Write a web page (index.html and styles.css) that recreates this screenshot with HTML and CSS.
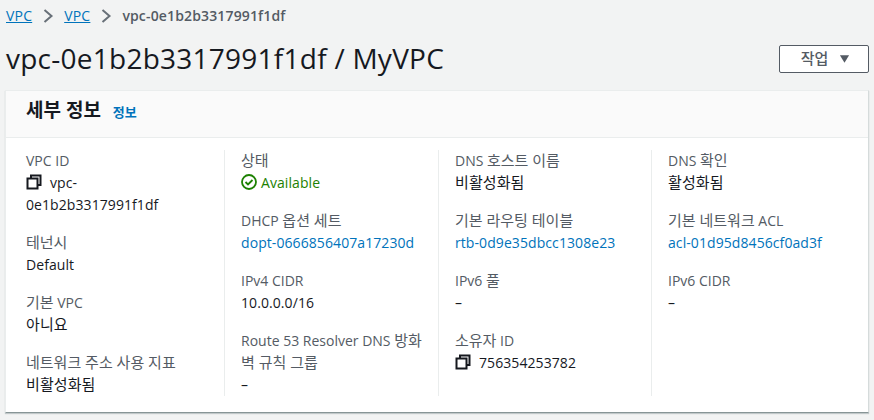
FILE: index.html
```
<!DOCTYPE html>
<html lang="ko">
<head>
<meta charset="utf-8">
<title>vpc-0e1b2b3317991f1df</title>
<link rel="stylesheet" href="styles.css">
</head>
<body>
<nav class="crumbs">
  <a href="#">VPC</a>
  <svg class="sep" viewBox="0 0 12 16"><path d="M2.5 2l7 6-7 6"/></svg>
  <a href="#">VPC</a>
  <svg class="sep" viewBox="0 0 12 16"><path d="M2.5 2l7 6-7 6"/></svg>
  <span class="current">vpc-0e1b2b3317991f1df</span>
</nav>
<header class="head">
  <h1>vpc-0e1b2b3317991f1df / MyVPC</h1>
  <button class="action"><span class="ko">작업</span><svg class="caret" viewBox="0 0 12 8"><path d="M1 0h10L6 8z"/></svg></button>
</header>
<section class="card">
  <div class="card-head"><h2>세부 정보</h2><a class="info" href="#">정보</a></div>
  <div class="grid">
    <div class="col first">
      <div class="item"><div class="k">VPC ID</div><div class="v"><svg class="copy" viewBox="0 0 16 16"><path d="M5 4V1.500h9.500V11H12"/><rect x="1.500" y="4.500" width="10" height="10"/></svg>vpc-<br>0e1b2b3317991f1df</div></div>
      <div class="item"><div class="k"><span class="ko">테넌시</span></div><div class="v">Default</div></div>
      <div class="item"><div class="k"><span class="ko">기본</span> VPC</div><div class="v"><span class="ko">아니요</span></div></div>
      <div class="item"><div class="k"><span class="ko">네트워크 주소 사용 지표</span></div><div class="v"><span class="ko">비활성화됨</span></div></div>
    </div>
    <div class="col">
      <div class="item"><div class="k"><span class="ko">상태</span></div><div class="v ok"><svg class="check" viewBox="0 0 16 16"><circle cx="8" cy="8" r="7"/><path d="M4.500 8l2.500 2.500 4.500-4.500"/></svg>Available</div></div>
      <div class="item"><div class="k">DHCP <span class="ko">옵션 세트</span></div><div class="v"><a href="#">dopt-0666856407a17230d</a></div></div>
      <div class="item"><div class="k">IPv4 CIDR</div><div class="v">10.0.0.0/16</div></div>
      <div class="item"><div class="k">Route 53 Resolver DNS <span class="ko">방화</span><br><span class="ko">벽 규칙 그룹</span></div><div class="v">–</div></div>
    </div>
    <div class="col">
      <div class="item"><div class="k">DNS <span class="ko">호스트 이름</span></div><div class="v"><span class="ko">비활성화됨</span></div></div>
      <div class="item"><div class="k"><span class="ko">기본 라우팅 테이블</span></div><div class="v"><a href="#">rtb-0d9e35dbcc1308e23</a></div></div>
      <div class="item"><div class="k">IPv6 <span class="ko">풀</span></div><div class="v">–</div></div>
      <div class="item"><div class="k"><span class="ko">소유자</span> ID</div><div class="v"><svg class="copy" viewBox="0 0 16 16"><path d="M5 4V1.500h9.500V11H12"/><rect x="1.500" y="4.500" width="10" height="10"/></svg>756354253782</div></div>
    </div>
    <div class="col">
      <div class="item"><div class="k">DNS <span class="ko">확인</span></div><div class="v"><span class="ko">활성화됨</span></div></div>
      <div class="item"><div class="k"><span class="ko">기본 네트워크</span> ACL</div><div class="v"><a href="#">acl-01d95d8456cf0ad3f</a></div></div>
      <div class="item"><div class="k">IPv6 CIDR</div><div class="v">–</div></div>
    </div>
  </div>
</section>
</body>
</html>
```
FILE: styles.css
```
* { box-sizing: border-box; }
html, body { margin: 0; height: 100%; overflow: hidden; }
body {
  background: #f2f3f3;
  color: #16191f;
  font: 14px/22px "Open Sans", "Noto Sans CJK KR", sans-serif;
  padding: 5px 5px 0 6px;
}
a { color: #0073bb; text-decoration: none; }
.ko { font-size: 15px; line-height: 1; }
.crumbs { display: flex; align-items: center; height: 22px; font-size: 14px; }
.crumbs a { color: #0073bb; text-decoration: underline; letter-spacing: .2px; }
.sep { width: 12px; height: 16px; margin: 0 10px; fill: none; stroke: #687078; stroke-width: 2; }
.current { color: #545b64; font-weight: 600; letter-spacing: .15px; }
.head { display: flex; justify-content: space-between; align-items: center; height: 63px; }
h1 { margin: -2px 0 0; font-size: 28px; line-height: 36px; font-weight: 400; letter-spacing: .25px; }
.action {
  display: flex; align-items: center; justify-content: center;
  width: 90px; height: 28px; padding: 0 0 0 3px;
  background: #fff; border: 1px solid #545b64; border-radius: 2px;
  color: #545b64; font: 500 14px/20px "Open Sans", "Noto Sans CJK KR", sans-serif;
}
.caret { width: 11px; height: 8px; margin-left: 11px; fill: #545b64; }
.card {
  height: 323px; margin-left: -1px; background: #fff;
  border: 1px solid #eaeded; border-bottom: 1px solid #879596; border-right: 1px solid #d5dbdb;
  box-shadow: 0 1px 1px rgba(0,28,36,.2);
}
.card-head {
  display: flex; align-items: baseline; height: 47px; padding: 6px 20px;
  background: #fafafa; border-bottom: 1px solid #eaeded;
}
h2 { margin: 0; font-size: 19px; line-height: 26px; font-weight: 700; }
.info { margin-left: 12px; font-size: 13px; font-weight: 600; }
.grid { display: grid; grid-template-columns: 218px 214px 213px 1fr; margin-top: 12px; }
.col { height: 246px; padding: 0 16px 0 16px; border-left: 1px solid #eaeded; }
.col.first { padding-left: 20px; border-left: 0; }
.item { margin-bottom: 16px; }
.k { color: #545b64; }
.v { letter-spacing: .08px; }
.v svg { vertical-align: -2px; }
.copy { width: 16px; height: 16px; margin-right: 8px; fill: none; stroke: #16191f; stroke-width: 2; }
.ok { color: #1d8102; }
.check { width: 16px; height: 16px; margin-right: 4px; fill: none; stroke: #1d8102; stroke-width: 1.800; }
```
